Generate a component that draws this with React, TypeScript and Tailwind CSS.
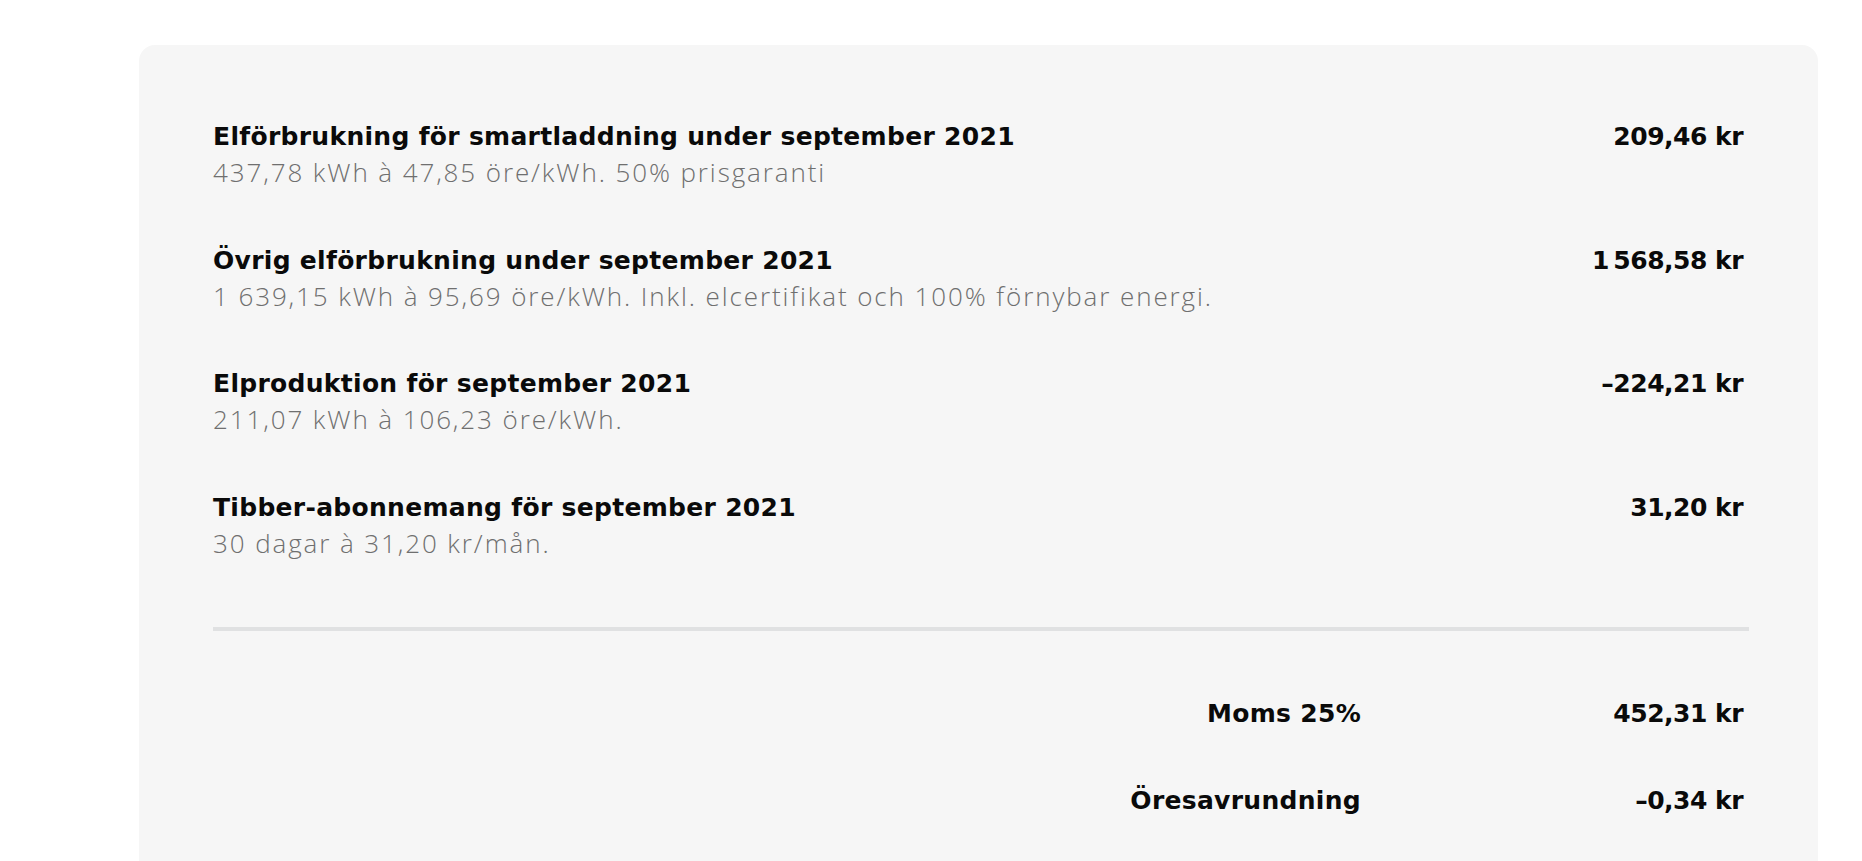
const lines = [
  {
    title: "Elförbrukning för smartladdning under september 2021",
    detail: "437,78 kWh à 47,85 öre/kWh. 50% prisgaranti",
    amount: "209,46 kr",
  },
  {
    title: "Övrig elförbrukning under september 2021",
    detail: "1 639,15 kWh à 95,69 öre/kWh. Inkl. elcertifikat och 100% förnybar energi.",
    amount: "1\u202f568,58 kr",
  },
  {
    title: "Elproduktion för september 2021",
    detail: "211,07 kWh à 106,23 öre/kWh.",
    amount: "–224,21 kr",
  },
  {
    title: "Tibber-abonnemang för september 2021",
    detail: "30 dagar à 31,20 kr/mån.",
    amount: "31,20 kr",
  },
];

const summary = [
  { label: "Moms 25%", amount: "452,31 kr" },
  { label: "Öresavrundning", amount: "–0,34 kr" },
];

const strong =
  "font-['DejaVu_Sans',sans-serif] text-[25px] font-bold leading-[40px] text-[#0a0a0a]";

export default function App() {
  return (
    <div className="min-h-screen bg-white pt-[45px] pl-[139px] pr-[44px]">
      <section className="rounded-t-[16px] bg-[#f6f6f6] pl-[74px] pr-[75px] pt-[72px] pb-[40px]">
        <ul className="flex flex-col gap-[53.5px]">
          {lines.map((line) => (
            <li key={line.title} className="flex items-start justify-between">
              <div>
                <p className={`${strong} tracking-[0.3px]`}>{line.title}</p>
                <p className="font-['Open_Sans',sans-serif] text-[26px] font-light leading-[30px] tracking-[1.9px] text-[#6f6f6f]">
                  {line.detail}
                </p>
              </div>
              <p className={`${strong} tracking-[-0.5px]`}>{line.amount}</p>
            </li>
          ))}
        </ul>

        <div className="mt-[69px] mr-[-6px] h-[4px] bg-[#e0e1e2]" />

        <dl className="mt-[63px] flex flex-col gap-[47px]">
          {summary.map((row) => (
            <div key={row.label} className="flex items-center justify-end">
              <dt className={`${strong} tracking-[0.3px]`}>{row.label}</dt>
              <dd className={`w-[382px] text-right tracking-[-0.5px] ${strong}`}>{row.amount}</dd>
            </div>
          ))}
        </dl>
      </section>
    </div>
  );
}
